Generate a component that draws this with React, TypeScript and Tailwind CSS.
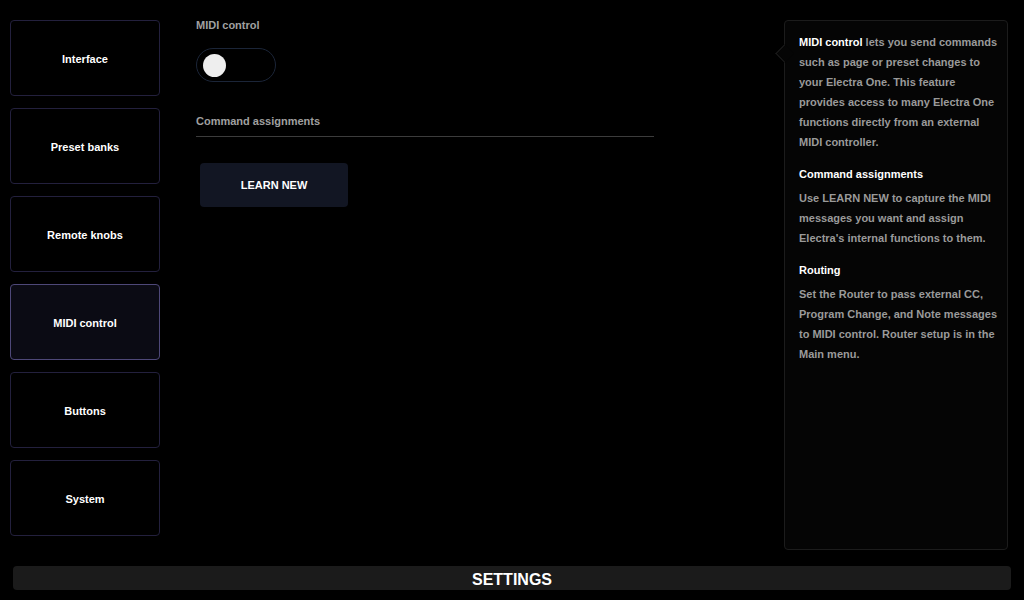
import React from "react";

const items = ["Interface", "Preset banks", "Remote knobs", "MIDI control", "Buttons", "System"];

export default function App() {
  return (
    <div
      className="w-[1024px] h-[600px] bg-black flex flex-col overflow-hidden"
      style={{ fontFamily: '"Liberation Sans", Arial, sans-serif' }}
    >
      <div className="flex h-[550px]">
        <div className="ml-[10px] mt-[20px] w-[150px] flex flex-col gap-[12px]">
          {items.map((it) => {
            const active = it === "MIDI control";
            return (
              <div
                key={it}
                className={
                  active
                    ? "h-[76px] pt-[2px] rounded-[4px] border border-[#4e4878] bg-[#0b0b14] flex items-center justify-center text-white text-[11px] font-bold"
                    : "h-[76px] pt-[2px] rounded-[4px] border border-[#23203d] bg-black flex items-center justify-center text-white text-[11px] font-bold"
                }
              >
                {it}
              </div>
            );
          })}
        </div>

        <div className="ml-[36px] w-[458px] pt-[18px] flex flex-col">
          <div className="text-[11px] leading-[14px] font-bold text-[#a0a0a0]">MIDI control</div>
          <div className="mt-[16px] w-[80px] h-[34px] rounded-full border-[1.5px] border-[#1b2538] flex items-center pl-[5.5px]">
            <div className="w-[23px] h-[23px] rounded-full bg-[#eeeeee]" />
          </div>
          <div className="mt-[32px] pb-[8px] border-b border-[#3c3c3c] text-[11px] leading-[14px] font-bold text-[#a0a0a0]">
            Command assignments
          </div>
          <div className="mt-[26px] ml-[4px] w-[148px] h-[44px] rounded-[4px] bg-[#121623] flex items-center justify-center text-white text-[11px] font-bold">
            LEARN NEW
          </div>
        </div>

        <div className="ml-auto mr-[16px] mt-[20px] w-[224px] h-[530px] relative rounded-[4px] border border-[#1c1c1c] bg-[#050505] pl-[14px] pr-[6px] pt-[11px]">
          <div className="absolute left-[-7px] top-[26px] w-[13px] h-[13px] rotate-45 bg-[#050505] border-l border-b border-[#1c1c1c]" />
          <p className="text-[11px] leading-[20px] font-bold text-[#9a9a9a] mb-[12px]">
            <span className="text-white">MIDI control</span> lets you send commands such as page or preset changes to your Electra One. This feature provides access to many Electra One functions directly from an external MIDI controller.
          </p>
          <h3 className="text-[11px] leading-[20px] font-bold text-white mb-[4px]">Command assignments</h3>
          <p className="text-[11px] leading-[20px] font-bold text-[#9a9a9a] mb-[12px]">
            Use LEARN NEW to capture the MIDI messages you want and assign Electra's internal functions to them.
          </p>
          <h3 className="text-[11px] leading-[20px] font-bold text-white mb-[4px]">Routing</h3>
          <p className="text-[11px] leading-[20px] font-bold text-[#9a9a9a]">
            Set the Router to pass external CC, Program Change, and Note messages to MIDI control. Router setup is in the Main menu.
          </p>
        </div>
      </div>

      <div className="mt-[16px] mx-[13px] h-[24px] pt-[4px] rounded-[4px] bg-[#1b1b1b] flex items-center justify-center text-white text-[16px] font-bold leading-[20px]">
        SETTINGS
      </div>
    </div>
  );
}
